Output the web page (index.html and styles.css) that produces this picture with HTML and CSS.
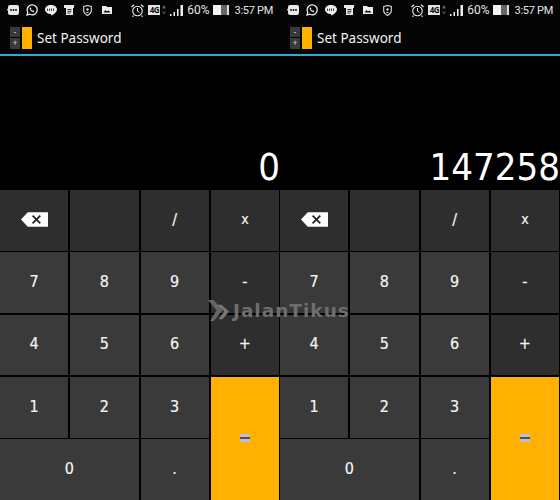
FILE: index.html

```html
<!DOCTYPE html>
<html lang="id">
<head>
  <meta charset="UTF-8" />
  <title>Set Password</title>
  <link rel="stylesheet" href="styles.css">
</head>
<body>
  <svg class="defs" width="0" height="0">
    <symbol id="ic-msg" viewBox="0 0 12 10"><path d="M3 0h7a2 2 0 0 1 2 2v6a2 2 0 0 1-2 2H3a2 2 0 0 1-2-2V6L0 4.500 1 3.500V2a2 2 0 0 1 2-2z" fill="#e8e8e8"/><circle cx="4" cy="5" r=".9" fill="#000"/><circle cx="6.500" cy="5" r=".9" fill="#000"/><circle cx="9" cy="5" r=".9" fill="#000"/></symbol>
    <symbol id="ic-wa" viewBox="0 0 12 12"><path d="M1 11l.8-2.800A5 5 0 1 1 3.800 10.200z" fill="none" stroke="#eee" stroke-width="1.300"/><path d="M4 3.500c-.8 1 0 2.500 1 3.500s2.300 1.500 3 .8l.3-.8-1.300-.8-.6.500c-.7-.3-1.200-.9-1.500-1.500l.5-.6-.7-1.200z" fill="#eee"/></symbol>
    <symbol id="ic-line" viewBox="0 0 12 11"><path d="M6 0c3.300 0 6 1.900 6 4.400 0 2.300-3 4.800-5.500 6.100-.4.200-.4-.5-.3-1.500C2.800 9 0 7 0 4.400 0 1.900 2.700 0 6 0z" fill="#eee"/><path d="M2.500 3.500v2.500M4.500 3.500v2.500M6.500 3.500v2.500M8.500 3.500v2.500" stroke="#000" stroke-width=".7"/></symbol>
    <symbol id="ic-news" viewBox="0 0 10 10"><path d="M0 0h10v3H9v7H2V3H0z" fill="#e8e8e8"/><path d="M3.500 4.500h4M3.500 6.300h4M3.500 8h3" stroke="#000" stroke-width=".8"/></symbol>
    <symbol id="ic-shield" viewBox="0 0 9 11"><path d="M.7 1.500L4.500.5l3.800 1v4.500c0 2-2 3.500-3.800 4.500C2.700 9.500.7 8 .7 6z" fill="none" stroke="#ddd" stroke-width="1.100"/><circle cx="4.500" cy="4.500" r="1.200" fill="#ddd"/><path d="M3 8c0-1.500 3-1.500 3 0z" fill="#ddd"/></symbol>
    <symbol id="ic-photo" viewBox="0 0 10 8"><path d="M0 0h4l1 1h5v7H0z" fill="#eee"/><path d="M1.500 6.500l2-2.500 1.500 1.500 1.500-1 2 2z" fill="#000"/></symbol>
    <symbol id="ic-alarm" viewBox="0 0 13 13"><circle cx="6.500" cy="7" r="4.800" fill="none" stroke="#eee" stroke-width="1.100"/><path d="M6.500 4v3.200l2 1.300" fill="none" stroke="#eee"/><path d="M.5 3L3 .7M12.500 3L10 .7M2.500 11.500l-1 1.300M10.500 11.500l1 1.300" stroke="#eee" stroke-width="1.200"/></symbol>
    <symbol id="ic-arrows" viewBox="0 0 4 10"><path d="M2 0l2 3.500H0z" fill="#666"/><path d="M2 10L0 6.500h4z" fill="#444"/></symbol>
    <symbol id="ic-signal" viewBox="0 0 13 11"><path d="M0 9h1.500v2H0zM3.500 7H5v4H3.500zM7 4h1.500v7H7zM10.500 0H13v11h-2.500z" fill="#eee"/></symbol>
  </svg>

  <div class="phones">
    <section class="phone">
      <div class="status">
        <div class="notif">
          <svg class="i-msg"><use href="#ic-msg"/></svg>
          <svg class="i-wa"><use href="#ic-wa"/></svg>
          <svg class="i-line"><use href="#ic-line"/></svg>
          <svg class="i-news"><use href="#ic-news"/></svg>
          <svg class="i-shield"><use href="#ic-shield"/></svg>
          <svg class="i-photo"><use href="#ic-photo"/></svg>
        </div>
        <div class="sys">
          <svg class="i-alarm"><use href="#ic-alarm"/></svg>
          <span class="lte">4G</span>
          <svg class="i-arrows"><use href="#ic-arrows"/></svg>
          <svg class="i-signal"><use href="#ic-signal"/></svg>
          <span class="pct">60%</span>
          <span class="batt"></span>
          <span class="clock">3:57 PM</span>
        </div>
      </div>
      <div class="appbar">
        <div class="logo">
          <div class="logo-keys"><span>-</span><span>+</span></div>
          <div class="logo-eq"></div>
        </div>
        <div class="apptitle">Set Password</div>
      </div>
      <div class="display">0</div>
      <div class="keys">
        <div class="key top"><svg class="back" viewBox="0 0 28 15"><path d="M7 0h21v15H7L0 7.500z" fill="#fff"/><path d="M12 3.500l8 8M20 3.500l-8 8" stroke="#222" stroke-width="1.800"/></svg></div>
        <div class="key top"></div>
        <div class="key top">/</div>
        <div class="key top small">x</div>
        <div class="key">7</div>
        <div class="key">8</div>
        <div class="key">9</div>
        <div class="key op">-</div>
        <div class="key">4</div>
        <div class="key">5</div>
        <div class="key">6</div>
        <div class="key op">+</div>
        <div class="key">1</div>
        <div class="key">2</div>
        <div class="key">3</div>
        <div class="key eq"><span class="eq-mark"></span></div>
        <div class="key zero">0</div>
        <div class="key">.</div>
      </div>
    </section>

    <section class="phone">
      <div class="status">
        <div class="notif">
          <svg class="i-msg"><use href="#ic-msg"/></svg>
          <svg class="i-wa"><use href="#ic-wa"/></svg>
          <svg class="i-line"><use href="#ic-line"/></svg>
          <svg class="i-news"><use href="#ic-news"/></svg>
          <svg class="i-photo swap"><use href="#ic-photo"/></svg>
          <svg class="i-shield swap"><use href="#ic-shield"/></svg>
        </div>
        <div class="sys">
          <svg class="i-alarm"><use href="#ic-alarm"/></svg>
          <span class="lte">4G</span>
          <svg class="i-arrows"><use href="#ic-arrows"/></svg>
          <svg class="i-signal"><use href="#ic-signal"/></svg>
          <span class="pct">60%</span>
          <span class="batt"></span>
          <span class="clock">3:57 PM</span>
        </div>
      </div>
      <div class="appbar">
        <div class="logo">
          <div class="logo-keys"><span>-</span><span>+</span></div>
          <div class="logo-eq"></div>
        </div>
        <div class="apptitle">Set Password</div>
      </div>
      <div class="display">147258</div>
      <div class="keys">
        <div class="key top"><svg class="back" viewBox="0 0 28 15"><path d="M7 0h21v15H7L0 7.500z" fill="#fff"/><path d="M12 3.500l8 8M20 3.500l-8 8" stroke="#222" stroke-width="1.800"/></svg></div>
        <div class="key top"></div>
        <div class="key top">/</div>
        <div class="key top small">x</div>
        <div class="key">7</div>
        <div class="key">8</div>
        <div class="key">9</div>
        <div class="key op">-</div>
        <div class="key">4</div>
        <div class="key">5</div>
        <div class="key">6</div>
        <div class="key op">+</div>
        <div class="key">1</div>
        <div class="key">2</div>
        <div class="key">3</div>
        <div class="key eq"><span class="eq-mark"></span></div>
        <div class="key zero">0</div>
        <div class="key">.</div>
      </div>
    </section>
  </div>

  <div class="watermark">
    <svg class="wm-logo" viewBox="0 0 26 24"><path d="M1 1h6l9 11-9 11H3l7-11z" fill="#666"/><path d="M10 6h5l8 7-7 8h-4l6-8z" fill="#777"/></svg>
    <span>JalanTikus</span>
  </div>
</body>
</html>
```

FILE: styles.css

```css
html, body { margin: 0; height: 500px; overflow: hidden; background: #000; }
body { font-family: "Noto Sans", "Open Sans", sans-serif; color: #fff; position: relative; }

.defs { position: absolute; }

.phones { display: flex; width: 560px; }
.phone { width: 280px; height: 500px; display: flex; flex-direction: column; }

/* status bar */
.status {
  height: 20px; display: flex; justify-content: space-between; align-items: center;
  padding: 0 7px; box-sizing: border-box; background: #050505;
}
.notif, .sys { display: flex; align-items: center; }
.i-msg { width: 12px; height: 10px; }
.i-wa { width: 12px; height: 12px; margin-left: 7px; }
.i-line { width: 12px; height: 11px; margin-left: 7px; }
.i-news { width: 10px; height: 10px; margin-left: 7px; }
.i-shield { width: 9px; height: 11px; margin-left: 9px; }
.i-photo { width: 10px; height: 8px; margin-left: 10px; }
.i-photo.swap { margin-left: 9px; }
.i-shield.swap { margin-left: 10px; }

.i-alarm { width: 13px; height: 13px; }
.lte {
  width: 12px; height: 10px; margin-left: 4px; background: #e4e4e4; color: #111;
  font-size: 8px; font-weight: 700; line-height: 10px; text-align: center; letter-spacing: -.5px;
}
.i-arrows { width: 4px; height: 10px; margin-left: 2px; }
.i-signal { width: 13px; height: 11px; margin-left: 4px; }
.pct { font-family: Roboto, sans-serif; font-size: 12px; margin-left: 4px; color: #e6e6e6; }
.batt { width: 14px; height: 10px; margin-left: 3px; background: linear-gradient(90deg, #f2f2f2 55%, #666 55%); border-right: 2px solid #ddd; }
.clock { font-family: Roboto, sans-serif; font-size: 11px; letter-spacing: -.3px; margin-left: 6px; color: #e6e6e6; }

/* app bar */
.appbar {
  height: 33px; padding: 1px 0 0 10px; border-bottom: 2px solid #2fa9cf;
  display: flex; align-items: center; background: #050505;
}
.logo { display: flex; gap: 1.500px; height: 22px; }
.logo-keys { width: 10px; display: flex; flex-direction: column; gap: 1px; }
.logo-keys span {
  flex: 1; background: #3a3a3a; font-size: 8px; line-height: 10px; text-align: center; color: #ddd;
}
.logo-eq { width: 10.500px; background: #ffb000; }
.apptitle { font-size: 13.500px; margin-left: 5px; color: #f2f2f2; }

/* number display */
.display {
  height: 134px; display: flex; justify-content: flex-end; align-items: flex-end;
  font-family: "DejaVu Sans Condensed", "DejaVu Sans", sans-serif;
  font-size: 38px; line-height: 46px; background: #000;
}

/* keypad */
.keys {
  flex: 1; display: grid; background: #000;
  grid-template-columns: repeat(4, 1fr); column-gap: 2px;
  grid-template-rows: repeat(5, 1fr); row-gap: 1.500px;
  padding-right: 1px;
}
.key {
  background: #3a3a3a; display: flex; align-items: center; justify-content: center;
  font-family: "DejaVu Sans Condensed", "DejaVu Sans", sans-serif;
  font-size: 16px; color: #f4f4f4; -webkit-text-stroke: .2px #f4f4f4;
  padding-bottom: 2px; box-sizing: border-box;
}
.key.top, .key.op { background: #2e2e2e; }
.key.small { font-size: 14px; }
.key.eq { background: #ffb000; grid-column: 4; grid-row: 4 / 6; padding-bottom: 0; }
.eq-mark {
  width: 10px; height: 8px; box-sizing: border-box; background: #6f4a1c;
  border-top: 3px solid #b9bde0; border-bottom: 3px solid #b9bde0;
}
.key.zero { grid-column: 1 / 3; }
.back { width: 27px; height: 15px; }

/* watermark over both screens */
.watermark {
  position: absolute; left: 207px; top: 298px; display: flex; align-items: center; gap: 1px;
  color: #6e6e6e; font-family: "DejaVu Sans", sans-serif; font-size: 18.500px; font-weight: 700; letter-spacing: 1px;
}
.wm-logo { width: 25px; height: 25px; }
```
